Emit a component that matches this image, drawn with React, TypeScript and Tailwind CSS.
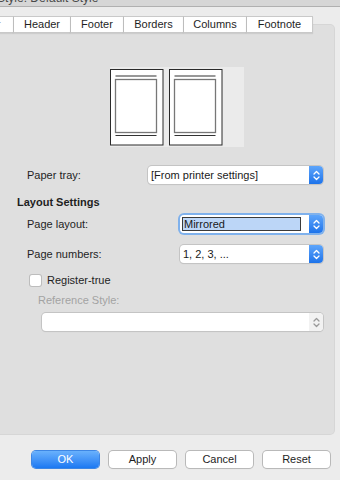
import React from 'react';

const font = { fontFamily: '"Liberation Sans", Arial, sans-serif' };

function Stepper({ disabled }: { disabled?: boolean }) {
  return (
    <div
      className={
        'w-[14px] h-full flex items-center justify-center rounded-r-[4px] ' +
        (disabled ? 'bg-[#f2f2f2]' : 'bg-gradient-to-b from-[#5da5fb] to-[#1c73ea]')
      }
    >
      <svg width="7" height="11" viewBox="0 0 7 11">
        <path
          d="M1 4 L3.5 1.5 L6 4 M1 7 L3.5 9.5 L6 7"
          fill="none"
          stroke={disabled ? '#9a9a9a' : '#ffffff'}
          strokeWidth="1.3"
          strokeLinecap="round"
          strokeLinejoin="round"
        />
      </svg>
    </div>
  );
}

function Select({ text, width, focused, disabled }: { text?: string; width: string; focused?: boolean; disabled?: boolean }) {
  return (
    <div
      className={
        'h-[18px] flex bg-white rounded-[4px] ' +
        width +
        (focused
          ? ' ring-[2px] ring-[#7fb1ec] shadow-[0_0_0_1px_#5a93d6]'
          : ' shadow-[0_0_0_1px_#c4c4c4,0_1px_1px_rgba(0,0,0,0.15)]')
      }
    >
      <div className="flex-1 flex items-center pl-[2px] pr-[8px] text-[11px] text-[#1a1a1a]">
        {focused ? (
          <div className="w-full h-[14px] bg-[#bcd6f7] border border-[#3a3a3a] flex items-center pl-[1px]">{text}</div>
        ) : (
          <span className="pl-[1px]">{text}</span>
        )}
      </div>
      <Stepper disabled={disabled} />
    </div>
  );
}

function Preview() {
  return (
    <svg width="135" height="80" viewBox="0 0 135 80">
      <rect x="0" y="0" width="134" height="80" fill="#ebebeb" />
      {[0.5, 59.5].map((x) => (
        <g key={x}>
          <rect x={x} y="2.5" width="52.5" height="75.5" fill="#ffffff" stroke="#2a2a2a" strokeWidth="1" />
          <line x1={x + 5} y1="9" x2={x + 46} y2="9" stroke="#333" strokeWidth="1.2" />
          <rect x={x + 5} y="12.5" width="41" height="53" fill="#ffffff" stroke="#777" strokeWidth="1.3" />
          <line x1={x + 5} y1="68.5" x2={x + 46} y2="68.5" stroke="#333" strokeWidth="1.2" />
        </g>
      ))}
    </svg>
  );
}

export default function App() {
  const tabs = [
    { label: 'r', w: 'w-[13px]', cut: true },
    { label: 'Header', w: 'w-[57px]' },
    { label: 'Footer', w: 'w-[53px]' },
    { label: 'Borders', w: 'w-[60px]' },
    { label: 'Columns', w: 'w-[63px]' },
    { label: 'Footnote', w: 'w-[67px]' },
  ];

  return (
    <div className="w-[360px] h-[480px] bg-white flex overflow-hidden" style={font}>
      <div className="w-[340px] h-full bg-[#ececec] flex flex-col">
        {/* title bar, mostly scrolled away */}
        <div className="h-[7px] bg-[#d6d6d6] border-b border-[#b0b0b0] overflow-hidden">
          <div className="-mt-[9px] -ml-[3px] text-[12px] leading-[14px] text-[#4a4a4a]">Style: Default Style</div>
        </div>

        {/* tabs */}
        <div className="relative z-10 mt-[9px] h-[17px] flex">
          {tabs.map((t, i) => (
            <div
              key={t.label}
              className={
                'h-full bg-white border-t border-b border-[#c9c9c9] flex items-center text-[11px] text-[#1e1e1e] shadow-[0_1px_1px_rgba(0,0,0,0.08)] ' +
                t.w +
                (i > 0 ? ' border-l border-l-[#bdbdbd] justify-center' : ' justify-start overflow-hidden') +
                (i === tabs.length - 1 ? ' border-r border-r-[#c9c9c9]' : '')
              }
            >
              {t.cut ? <span className="-ml-[3px] text-[#888]">r</span> : t.label}
            </div>
          ))}
        </div>

        {/* panel */}
        <div className="-mt-[8px] w-[334px] h-[409px] bg-[#dfdfdf] rounded-r-[4px] shadow-[0_0_0_1px_#d6d6d6] flex flex-col text-[11px] text-[#1e1e1e]">
          <div className="mt-[42px] ml-[110px]">
            <Preview />
          </div>

          <div className="mt-[19px] h-[18px] flex items-center">
            <span className="ml-[27px] w-[121px]">Paper tray:</span>
            <Select text="[From printer settings]" width="w-[175px]" />
          </div>

          <div className="mt-[11px] h-[14px] flex items-center pl-[17px] font-bold">Layout Settings</div>

          <div className="mt-[6px] h-[18px] flex items-center">
            <span className="ml-[27px] w-[153px]">Page layout:</span>
            <Select text="Mirrored" width="w-[143px]" focused />
          </div>

          <div className="mt-[12px] h-[18px] flex items-center">
            <span className="ml-[27px] w-[153px]">Page numbers:</span>
            <Select text="1, 2, 3, ..." width="w-[143px]" />
          </div>

          <div className="mt-[10px] h-[14px] flex items-center pl-[30px]">
            <div className="w-[11px] h-[11px] bg-white rounded-[2px] shadow-[0_0_0_1px_#bdbdbd]" />
            <span className="ml-[6px]">Register-true</span>
          </div>

          <div className="mt-[6px] h-[14px] flex items-center pl-[38px] text-[#a3a3a3]">Reference Style:</div>

          <div className="mt-[6px] ml-[42px]">
            <Select width="w-[281px]" disabled />
          </div>
        </div>

        {/* buttons */}
        <div className="mt-[17px] flex pl-[32px] gap-[9px] text-[11px]">
          <button className="w-[67px] h-[17px] rounded-[4px] bg-gradient-to-b from-[#69b1fc] to-[#1a78f2] text-white shadow-[0_0_0_1px_#3d86e4]">
            OK
          </button>
          {['Apply', 'Cancel', 'Reset'].map((b) => (
            <button
              key={b}
              className="w-[67px] h-[17px] rounded-[4px] bg-white text-[#1e1e1e] shadow-[0_0_0_1px_#b9b9b9,0_1px_1px_rgba(0,0,0,0.12)] ml-[1px]"
            >
              {b}
            </button>
          ))}
        </div>
      </div>
    </div>
  );
}
